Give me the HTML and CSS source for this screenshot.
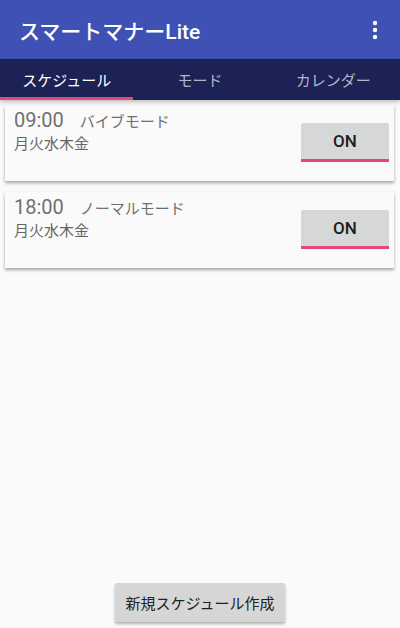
FILE: index.html
```html
<!DOCTYPE html>
<html lang="ja">
<head>
    <meta charset="UTF-8">
    <meta name="viewport" content="width=device-width, initial-scale=1.0">
    <title>スマートマナーLite</title>
    <link rel="stylesheet" href="styles.css">
</head>
<body>

<div class="app">
    <header class="toolbar">
        <h1 class="title">スマートマナーLite</h1>
        <svg class="menu" width="6" height="20" viewBox="0 0 6 20">
            <circle cx="3" cy="3" r="2.2" fill="#fff"/>
            <circle cx="3" cy="10" r="2.2" fill="#fff"/>
            <circle cx="3" cy="17" r="2.2" fill="#fff"/>
        </svg>
    </header>

    <nav class="tabs">
        <div class="tab active">スケジュール</div>
        <div class="tab">モード</div>
        <div class="tab">カレンダー</div>
    </nav>

    <main class="list">
        <div class="card">
            <div class="info">
                <div class="line1">
                    <span class="time">09:00</span>
                    <span class="mode">バイブモード</span>
                </div>
                <div class="days">月火水木金</div>
            </div>
            <button class="toggle" type="button">ON</button>
        </div>

        <div class="card">
            <div class="info">
                <div class="line1">
                    <span class="time">18:00</span>
                    <span class="mode">ノーマルモード</span>
                </div>
                <div class="days">月火水木金</div>
            </div>
            <button class="toggle" type="button">ON</button>
        </div>
    </main>

    <footer class="bottom">
        <button class="add-btn" type="button">新規スケジュール作成</button>
    </footer>
</div>

</body>
</html>
```

FILE: styles.css
```css
* {
    box-sizing: border-box;
}
body {
    margin: 0;
    background-color: #fafafa;
    font-family: Roboto, "Noto Sans CJK JP", sans-serif;
}
.app {
    height: 628px;
    display: flex;
    flex-direction: column;
}
.toolbar {
    height: 59px;
    background-color: #3f51b5;
    display: flex;
    align-items: center;
    justify-content: space-between;
    padding: 0 22px 0 19px;
}
.title {
    margin: 0;
    color: #fff;
    font-size: 21px;
    font-weight: 500;
}
.tabs {
    height: 41px;
    background-color: #1c2253;
    display: grid;
    grid-template-columns: 1fr 1fr 1fr;
    box-shadow: 0 2px 4px rgba(0, 0, 0, 0.25);
    position: relative;
}
.tab {
    display: flex;
    align-items: center;
    justify-content: center;
    color: #b4b7c9;
    font-size: 15px;
    padding-top: 2px;
    border-bottom: 3px solid transparent;
}
.tab.active {
    color: #fff;
    border-bottom-color: #e5477d;
}
.list {
    flex: 1;
    padding: 5px 6px 0 5px;
    display: flex;
    flex-direction: column;
    gap: 11px;
}
.card {
    height: 76px;
    background-color: #fafafa;
    box-shadow: 0 2px 3px rgba(0, 0, 0, 0.35);
    display: flex;
    justify-content: space-between;
    padding: 3px 5px 0 9px;
}
.line1 {
    display: flex;
    align-items: baseline;
    gap: 16px;
}
.time {
    font-size: 20px;
    color: #707070;
    line-height: 24px;
}
.mode {
    font-size: 15px;
    color: #707070;
}
.days {
    font-size: 15px;
    color: #666;
    margin-top: 0;
}
.toggle {
    margin-top: 15px;
    width: 88px;
    height: 39px;
    background-color: #d6d7d7;
    border: none;
    border-bottom: 3px solid #e5477d;
    border-radius: 2px 2px 0 0;
    font-family: Roboto, sans-serif;
    font-size: 17px;
    font-weight: 500;
    color: #1e1e1e;
    padding: 0;
}
.bottom {
    display: flex;
    justify-content: center;
    padding-bottom: 6px;
}
.add-btn {
    height: 39px;
    padding: 0 11px;
    background-color: #d6d6d6;
    border: none;
    border-radius: 2px;
    box-shadow: 0 2px 3px rgba(0, 0, 0, 0.3);
    font-family: Roboto, "Noto Sans CJK JP", sans-serif;
    font-size: 15px;
    color: #222;
}
```
